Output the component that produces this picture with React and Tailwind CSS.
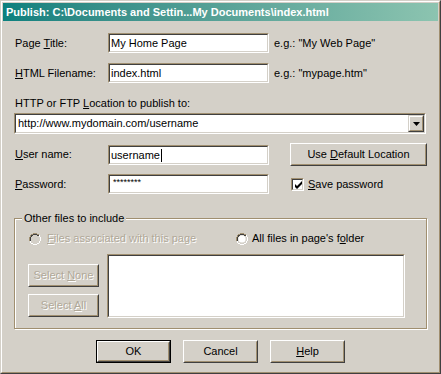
import React from "react";

// Win2000-style "Publish" dialog

function Sunken({ className = "", children }) {
  return (
    <div className={`border border-t-[#a08f70] border-l-[#a08f70] border-b-white border-r-white ${className}`}>
      <div className="h-full w-full border border-t-[#404040] border-l-[#404040] border-b-[#d4d0c8] border-r-[#d4d0c8] bg-white">
        {children}
      </div>
    </div>
  );
}

function Btn({ className = "", isDefault = false, disabled = false, children }) {
  const inner = (
    <div className="h-full w-full border border-t-white border-l-white border-b-[#404040] border-r-[#404040]">
      <div className={`flex h-full w-full items-center justify-center border border-t-[#d4d0c8] border-l-[#d4d0c8] border-b-[#a08f70] border-r-[#a08f70] ${disabled ? "text-[#b0a898] [text-shadow:1px_1px_0_#ffffff]" : "text-black"}`}>
        <span>{children}</span>
      </div>
    </div>
  );
  if (isDefault) {
    return <div className={`border border-black ${className}`}>{inner}</div>;
  }
  return <div className={className}>{inner}</div>;
}

function Radio({ disabled = false }) {
  return (
    <svg width="12" height="12" viewBox="0 0 12 12" className="shrink-0">
      {/* outer ring */}
      <rect x="4" y="0" width="4" height="1" fill="#a08f70" />
      <rect x="2" y="1" width="2" height="1" fill="#a08f70" />
      <rect x="8" y="1" width="2" height="1" fill="#a08f70" />
      <rect x="1" y="2" width="1" height="2" fill="#a08f70" />
      <rect x="0" y="4" width="1" height="4" fill="#a08f70" />
      <rect x="1" y="8" width="1" height="2" fill="#ffffff" />
      <rect x="2" y="10" width="2" height="1" fill="#ffffff" />
      <rect x="4" y="11" width="4" height="1" fill="#ffffff" />
      <rect x="8" y="10" width="2" height="1" fill="#ffffff" />
      <rect x="10" y="8" width="1" height="2" fill="#ffffff" />
      <rect x="11" y="4" width="1" height="4" fill="#ffffff" />
      <rect x="10" y="2" width="1" height="2" fill="#ffffff" />
      {/* inner ring */}
      <rect x="4" y="1" width="4" height="1" fill="#404040" />
      <rect x="2" y="2" width="2" height="1" fill="#404040" />
      <rect x="8" y="2" width="2" height="1" fill="#404040" />
      <rect x="1" y="4" width="1" height="4" fill="#404040" />
      <rect x="2" y="3" width="1" height="1" fill="#404040" />
      <rect x="2" y="8" width="1" height="1" fill="#d4d0c8" />
      <rect x="2" y="9" width="2" height="1" fill="#d4d0c8" />
      <rect x="4" y="10" width="4" height="1" fill="#d4d0c8" />
      <rect x="8" y="9" width="2" height="1" fill="#d4d0c8" />
      <rect x="9" y="8" width="1" height="1" fill="#d4d0c8" />
      <rect x="10" y="4" width="1" height="4" fill="#d4d0c8" />
      <rect x="9" y="3" width="1" height="1" fill="#d4d0c8" />
      {/* fill */}
      <circle cx="6" cy="6" r="3.6" fill={disabled ? "#d4d0c8" : "#ffffff"} />
    </svg>
  );
}

export default function App() {
  const font = "font-['Liberation_Sans',Arial,sans-serif]";
  return (
    <div className={`h-[374px] w-[441px] border border-t-[#d4d0c8] border-l-[#d4d0c8] border-b-[#404040] border-r-[#404040] ${font} text-[11px] leading-[13px] text-black`}>
      <div className="flex h-full w-full flex-col border border-t-white border-l-white border-b-[#a08f70] border-r-[#a08f70] bg-[#d4d0c8] p-px">
        {/* title bar */}
        <div className="flex h-[18px] shrink-0 items-center bg-linear-to-r from-[#0a807e] to-[#8cc4b0] pl-[3px] text-[11px] font-bold text-white">
          <span>Publish: C:\Documents and Settin...My Documents\index.html</span>
        </div>

        <div className="flex flex-col pl-[12px]">
          {/* page title */}
          <div className="mt-[12px] flex h-[20px] items-center">
            <div className="w-[93px]">Page <u>T</u>itle:</div>
            <Sunken className="h-[20px] w-[161px]">
              <div className="pl-[1px] pt-[2px]">My Home Page</div>
            </Sunken>
            <div className="ml-[5px]">e.g.: "My Web Page"</div>
          </div>

          {/* filename */}
          <div className="mt-[10px] flex h-[20px] items-center">
            <div className="w-[93px]"><u>H</u>TML Filename:</div>
            <Sunken className="h-[20px] w-[161px]">
              <div className="pl-[1px] pt-[2px]">index.html</div>
            </Sunken>
            <div className="ml-[5px]">e.g.: "mypage.htm"</div>
          </div>

          <div className="mt-[14px]">HTTP or FTP <u>L</u>ocation to publish to:</div>

          {/* combo */}
          <Sunken className="ml-[-1px] mt-[3px] h-[21px] w-[412px]">
            <div className="flex h-full items-center">
              <div className="flex-1 pl-[2px]">http://www.mydomain.com/username</div>
              <div className="flex h-[17px] w-[16px] border border-t-[#d4d0c8] border-l-[#d4d0c8] border-b-[#404040] border-r-[#404040]">
                <div className="flex h-full w-full items-center justify-center border border-t-white border-l-white border-b-[#a08f70] border-r-[#a08f70] bg-[#d4d0c8]">
                  <svg width="7" height="4" viewBox="0 0 7 4">
                    <path d="M0 0h7L3.5 4z" fill="#000" />
                  </svg>
                </div>
              </div>
            </div>
          </Sunken>

          {/* user name */}
          <div className="mt-[9px] flex h-[23px] items-center">
            <div className="w-[93px]"><u>U</u>ser name:</div>
            <Sunken className="h-[20px] w-[161px]">
              <div className="flex items-center pl-[1px] pt-[2px]">
                <span>username</span>
                <span className="ml-px inline-block h-[13px] w-px bg-black" />
              </div>
            </Sunken>
            <Btn className="ml-[21px] h-[23px] w-[137px]">Use <u>D</u>efault Location</Btn>
          </div>

          {/* password */}
          <div className="mt-[8px] flex h-[20px] items-center">
            <div className="w-[93px]"><u>P</u>assword:</div>
            <Sunken className="h-[20px] w-[161px]">
              <div className="pl-[3px] pt-[1px] text-[9px] leading-[10px]">********</div>
            </Sunken>
            <div className="ml-[22px] flex items-center">
              <Sunken className="h-[13px] w-[13px]">
                <svg width="9" height="9" viewBox="0 0 9 9" className="ml-[1px] mt-[1px]">
                  <path d="M1 3v3l2 2l5-5V0L3 5z" fill="#000" />
                </svg>
              </Sunken>
              <div className="ml-[4px]"><u>S</u>ave password</div>
            </div>
          </div>

          {/* group box */}
          <div className="relative ml-[-1px] mt-[24px] h-[111px] w-[413px] border border-[#a08f70] shadow-[inset_1px_1px_0_#ffffff,1px_1px_0_#ffffff]">
            <div className="absolute left-[7px] top-[-7px] bg-[#d4d0c8] px-[2px]">Other files to include</div>
            <div className="mt-[13px] flex h-[13px] items-center pl-[14px]">
              <Radio disabled />
              <div className="ml-[6px] w-[189px] text-[#b0a898] [text-shadow:1px_1px_0_#ffffff]"><u>F</u>iles associated with this page</div>
              <Radio />
              <div className="ml-[4px]">All files in page's f<u>o</u>lder</div>
            </div>
            <div className="mt-[9px] flex items-start">
              <div className="ml-[13px] mt-[10px] flex flex-col gap-[7px]">
                <Btn disabled className="h-[23px] w-[71px]">Select <u>N</u>one</Btn>
                <Btn disabled className="h-[23px] w-[71px]">Select <u>A</u>ll</Btn>
              </div>
              <Sunken className="ml-[8px] h-[64px] w-[298px]" />
            </div>
          </div>

          {/* bottom buttons */}
          <div className="mt-[11px] flex gap-[12px] pl-[81px]">
            <Btn isDefault className="h-[23px] w-[75px]">OK</Btn>
            <Btn className="h-[23px] w-[75px]">Cancel</Btn>
            <Btn className="h-[23px] w-[75px]"><u>H</u>elp</Btn>
          </div>
        </div>
      </div>
    </div>
  );
}
